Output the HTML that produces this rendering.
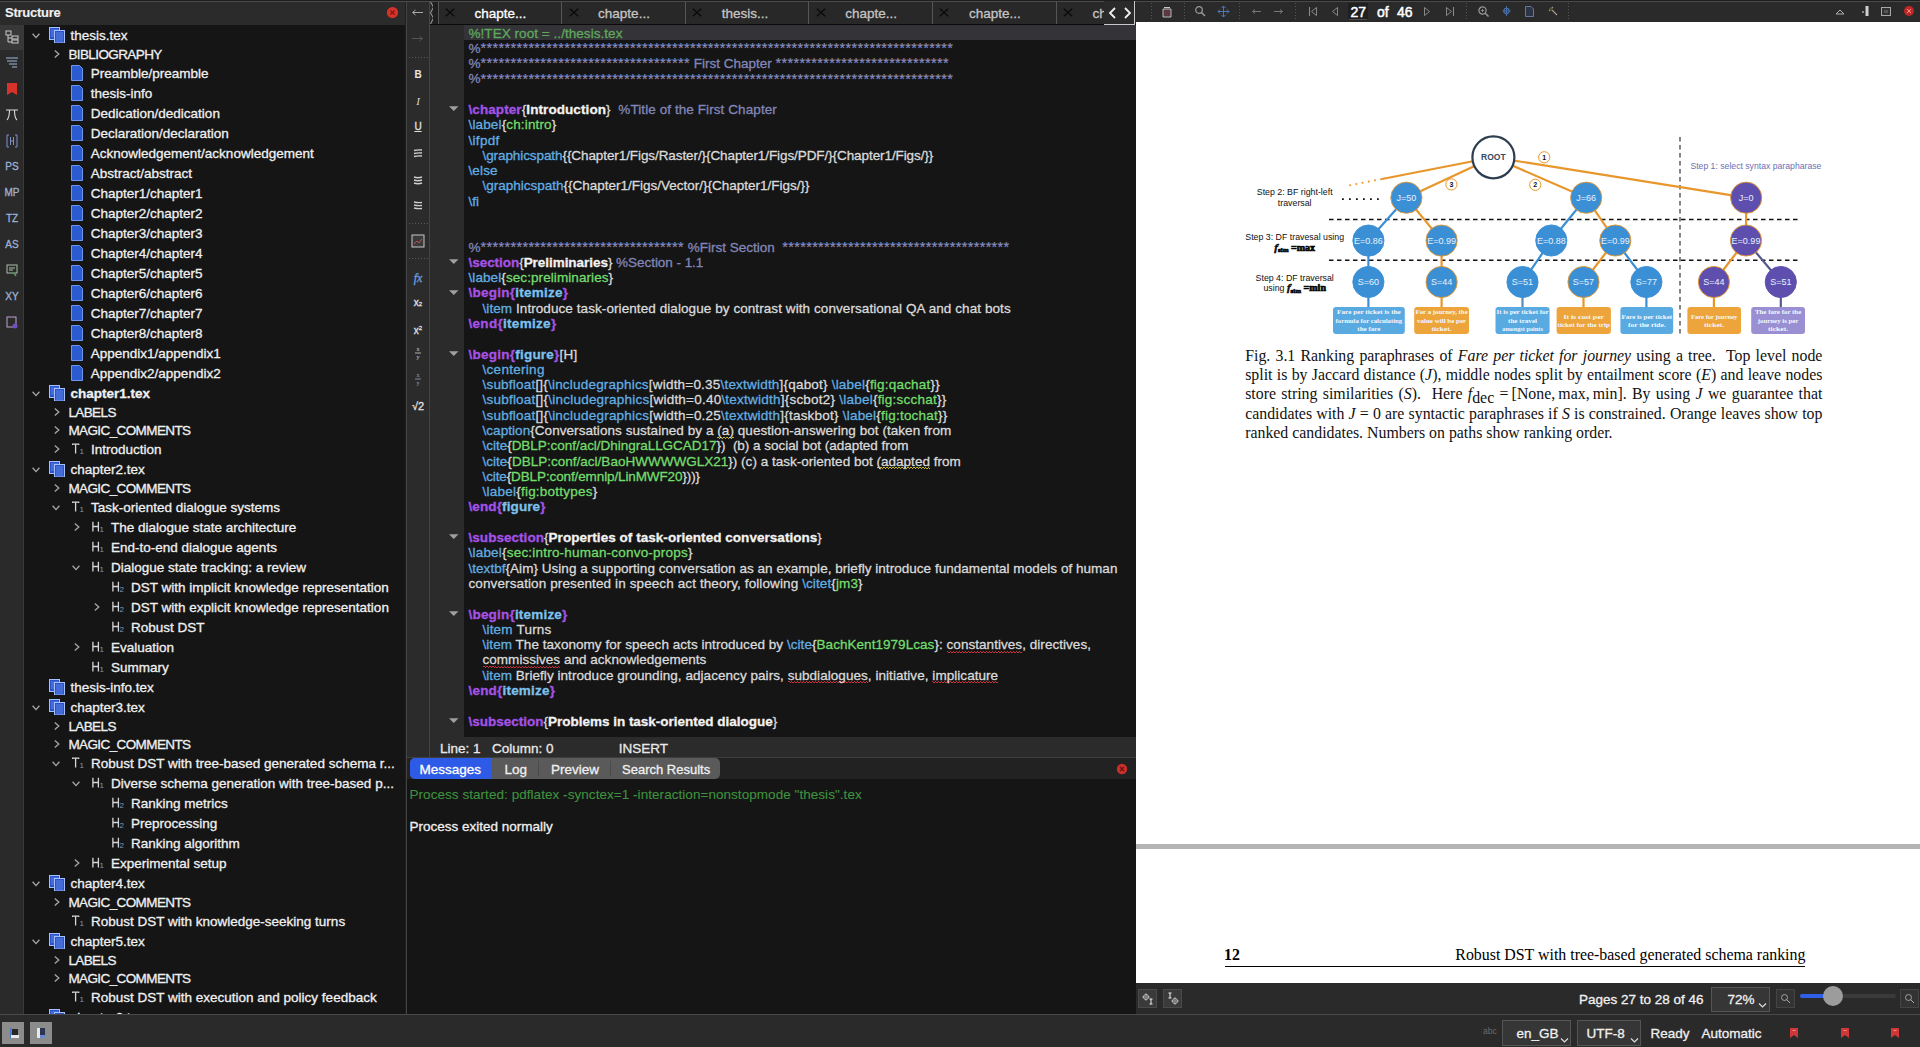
<!DOCTYPE html><html><head><meta charset="utf-8"><style>
*{margin:0;padding:0;box-sizing:border-box}
html,body{width:1920px;height:1047px;overflow:hidden;background:#1b1b1b;font-family:"Liberation Sans",sans-serif;color:#e6e6e6;-webkit-text-stroke-width:0.3px}
.a{position:absolute}
.t{position:absolute;white-space:pre;font-size:13.5px;line-height:20px}
</style></head><body>
<div class="a" style="left:0;top:0;width:1920px;height:1px;background:#1e1e1e"></div>
<div class="a" style="left:0;top:1px;width:1920px;height:1px;background:#4a4a4a"></div>
<div class="a" style="left:0;top:2px;width:406px;height:23px;background:#2b2b2b"></div>
<div class="t" style="left:5px;top:3px;font-weight:bold;font-size:13px;letter-spacing:-0.25px;color:#f0f0f0;-webkit-text-stroke-width:0.1px">Structure</div>
<div class="a" style="left:0;top:25px;width:23px;height:989px;background:#2a2a2a"></div>
<div class="a" style="left:23px;top:25px;width:1px;height:989px;background:#3a3a3a"></div>
<div class="a" style="left:24px;top:25px;width:381px;height:989px;background:#151515"></div>
<div class="a" style="left:405px;top:2px;width:2px;height:1012px;background:#1e1e1e"></div>
<div class="a" style="left:406px;top:2px;width:1px;height:1012px;background:#444"></div>
<div class="a" style="left:407px;top:2px;width:22px;height:755px;background:#2b2b2b"></div>
<div class="a" style="left:429px;top:2px;width:1px;height:755px;background:#444"></div>
<div class="a" style="left:430px;top:2px;width:706px;height:22px;background:#282828"></div>
<div class="a" style="left:430px;top:24px;width:706px;height:1px;background:#0a0a0a"></div>
<div class="a" style="left:430px;top:25px;width:34px;height:712px;background:#2b2b2b"></div>
<div class="a" style="left:464px;top:25px;width:672px;height:712px;background:#151515"></div>
<div class="a" style="left:464px;top:25px;width:672px;height:15px;background:#333338"></div>
<div class="a" style="left:430px;top:737px;width:706px;height:20px;background:#2b2b2b"></div>
<div class="a" style="left:407px;top:757px;width:729px;height:257px;background:#151515"></div>
<div class="a" style="left:1136px;top:2px;width:784px;height:20px;background:#2a2a2a"></div>
<div class="a" style="left:1136px;top:22px;width:784px;height:961px;background:#ffffff"></div>
<div class="a" style="left:1136px;top:844px;width:784px;height:5px;background:#b4b4b4"></div>
<div class="a" style="left:1136px;top:983px;width:784px;height:31px;background:#2a2a2a"></div>
<div class="a" style="left:0;top:1014px;width:1920px;height:1px;background:#4a4a4a"></div>
<div class="a" style="left:0;top:1015px;width:1920px;height:32px;background:#2a2a2a"></div>
<svg width="0" height="0" style="position:absolute"><defs>
<symbol id="chv" viewBox="0 0 8 6"><path d="M0.6 0.8 L4 4.6 L7.4 0.8" fill="none" stroke="#a8a8a8" stroke-width="1.3"/></symbol>
<symbol id="chr" viewBox="0 0 6 8"><path d="M0.8 0.6 L4.8 4 L0.8 7.4" fill="none" stroke="#a8a8a8" stroke-width="1.3"/></symbol>
<symbol id="doc" viewBox="0 0 12 16"><path d="M0.5 0.5 H8.5 L11.5 3.5 V15.5 H0.5 Z" fill="#2b5bd0" stroke="#7196e8" stroke-width="1"/></symbol>
<symbol id="mdoc" viewBox="0 0 16 16"><rect x="0.5" y="0.5" width="10" height="12" fill="#2a52cc" stroke="#a4c0ff" stroke-width="1"/><path d="M2 3h7M2 5h7M2 7h7M2 9h7" stroke="#86a8f0" stroke-width="0.6"/><rect x="5.5" y="3.5" width="10" height="12.5" fill="#2a52cc" stroke="#a4c0ff" stroke-width="1"/><path d="M7 6h7M7 8h7M7 10h7M7 12h7M7 14h7" stroke="#86a8f0" stroke-width="0.6"/></symbol>
</defs></svg>
<div class="a" style="left:0;top:0;width:405px;height:1014px;overflow:hidden">
<svg class="a" style="left:32px;top:32.5px" width="8" height="6"><use href="#chv"/></svg>
<svg class="a" style="left:49px;top:27.0px" width="16" height="16"><use href="#mdoc"/></svg>
<div class="t" style="left:70.5px;top:25.8px;color:#f0f0f0">thesis.tex</div>
<svg class="a" style="left:53.5px;top:50.0px" width="6" height="8"><use href="#chr"/></svg>
<div class="t" style="left:68.4px;top:44.8px;letter-spacing:-0.6px;color:#f0f0f0">BIBLIOGRAPHY</div>
<svg class="a" style="left:71px;top:65.0px" width="12" height="16"><use href="#doc"/></svg>
<div class="t" style="left:90.8px;top:63.8px;color:#f0f0f0">Preamble/preamble</div>
<svg class="a" style="left:71px;top:85.0px" width="12" height="16"><use href="#doc"/></svg>
<div class="t" style="left:90.8px;top:83.8px;color:#f0f0f0">thesis-info</div>
<svg class="a" style="left:71px;top:105.0px" width="12" height="16"><use href="#doc"/></svg>
<div class="t" style="left:90.8px;top:103.8px;color:#f0f0f0">Dedication/dedication</div>
<svg class="a" style="left:71px;top:125.0px" width="12" height="16"><use href="#doc"/></svg>
<div class="t" style="left:90.8px;top:123.8px;color:#f0f0f0">Declaration/declaration</div>
<svg class="a" style="left:71px;top:145.0px" width="12" height="16"><use href="#doc"/></svg>
<div class="t" style="left:90.8px;top:143.8px;color:#f0f0f0">Acknowledgement/acknowledgement</div>
<svg class="a" style="left:71px;top:165.0px" width="12" height="16"><use href="#doc"/></svg>
<div class="t" style="left:90.8px;top:163.8px;color:#f0f0f0">Abstract/abstract</div>
<svg class="a" style="left:71px;top:185.0px" width="12" height="16"><use href="#doc"/></svg>
<div class="t" style="left:90.8px;top:183.8px;color:#f0f0f0">Chapter1/chapter1</div>
<svg class="a" style="left:71px;top:205.0px" width="12" height="16"><use href="#doc"/></svg>
<div class="t" style="left:90.8px;top:203.8px;color:#f0f0f0">Chapter2/chapter2</div>
<svg class="a" style="left:71px;top:225.0px" width="12" height="16"><use href="#doc"/></svg>
<div class="t" style="left:90.8px;top:223.8px;color:#f0f0f0">Chapter3/chapter3</div>
<svg class="a" style="left:71px;top:245.0px" width="12" height="16"><use href="#doc"/></svg>
<div class="t" style="left:90.8px;top:243.8px;color:#f0f0f0">Chapter4/chapter4</div>
<svg class="a" style="left:71px;top:265.0px" width="12" height="16"><use href="#doc"/></svg>
<div class="t" style="left:90.8px;top:263.8px;color:#f0f0f0">Chapter5/chapter5</div>
<svg class="a" style="left:71px;top:285.0px" width="12" height="16"><use href="#doc"/></svg>
<div class="t" style="left:90.8px;top:283.8px;color:#f0f0f0">Chapter6/chapter6</div>
<svg class="a" style="left:71px;top:305.0px" width="12" height="16"><use href="#doc"/></svg>
<div class="t" style="left:90.8px;top:303.8px;color:#f0f0f0">Chapter7/chapter7</div>
<svg class="a" style="left:71px;top:325.0px" width="12" height="16"><use href="#doc"/></svg>
<div class="t" style="left:90.8px;top:323.8px;color:#f0f0f0">Chapter8/chapter8</div>
<svg class="a" style="left:71px;top:345.0px" width="12" height="16"><use href="#doc"/></svg>
<div class="t" style="left:90.8px;top:343.8px;color:#f0f0f0">Appendix1/appendix1</div>
<svg class="a" style="left:71px;top:365.0px" width="12" height="16"><use href="#doc"/></svg>
<div class="t" style="left:90.8px;top:363.8px;color:#f0f0f0">Appendix2/appendix2</div>
<svg class="a" style="left:32px;top:390.5px" width="8" height="6"><use href="#chv"/></svg>
<svg class="a" style="left:49px;top:385.0px" width="16" height="16"><use href="#mdoc"/></svg>
<div class="t" style="left:70.5px;top:383.8px;font-weight:bold;color:#f0f0f0">chapter1.tex</div>
<svg class="a" style="left:53.5px;top:408.0px" width="6" height="8"><use href="#chr"/></svg>
<div class="t" style="left:68.4px;top:402.8px;letter-spacing:-0.6px;color:#f0f0f0">LABELS</div>
<svg class="a" style="left:53.5px;top:426.0px" width="6" height="8"><use href="#chr"/></svg>
<div class="t" style="left:68.4px;top:420.8px;letter-spacing:-0.6px;color:#f0f0f0">MAGIC_COMMENTS</div>
<svg class="a" style="left:53.5px;top:445.0px" width="6" height="8"><use href="#chr"/></svg>
<svg class="a" style="left:72px;top:443.0px" width="13" height="12"><path d="M0 1.1H7.2M3.6 1.1V10.4M0.5 0.5V2M6.7 0.5V2" fill="none" stroke="#d6d6d6" stroke-width="1.3"/><text x="7.6" y="10.6" font-size="8" font-family="Liberation Sans" fill="#7a9ac0">1</text></svg>
<div class="t" style="left:91px;top:439.8px;color:#f0f0f0">Introduction</div>
<svg class="a" style="left:32px;top:466.5px" width="8" height="6"><use href="#chv"/></svg>
<svg class="a" style="left:49px;top:461.0px" width="16" height="16"><use href="#mdoc"/></svg>
<div class="t" style="left:70.5px;top:459.8px;color:#f0f0f0">chapter2.tex</div>
<svg class="a" style="left:53.5px;top:484.0px" width="6" height="8"><use href="#chr"/></svg>
<div class="t" style="left:68.4px;top:478.8px;letter-spacing:-0.6px;color:#f0f0f0">MAGIC_COMMENTS</div>
<svg class="a" style="left:52px;top:504.5px" width="8" height="6"><use href="#chv"/></svg>
<svg class="a" style="left:72px;top:501.0px" width="13" height="12"><path d="M0 1.1H7.2M3.6 1.1V10.4M0.5 0.5V2M6.7 0.5V2" fill="none" stroke="#d6d6d6" stroke-width="1.3"/><text x="7.6" y="10.6" font-size="8" font-family="Liberation Sans" fill="#7a9ac0">1</text></svg>
<div class="t" style="left:91px;top:497.8px;color:#f0f0f0">Task-oriented dialogue systems</div>
<svg class="a" style="left:73.5px;top:523.0px" width="6" height="8"><use href="#chr"/></svg>
<svg class="a" style="left:92px;top:521.0px" width="13" height="12"><path d="M0.9 0.8V10.4M6.4 0.8V10.4M0.9 5.5H6.4" fill="none" stroke="#d6d6d6" stroke-width="1.3"/><text x="7.6" y="10.6" font-size="8" font-family="Liberation Sans" fill="#7a9ac0">1</text></svg>
<div class="t" style="left:111px;top:517.8px;color:#f0f0f0">The dialogue state architecture</div>
<svg class="a" style="left:92px;top:541.0px" width="13" height="12"><path d="M0.9 0.8V10.4M6.4 0.8V10.4M0.9 5.5H6.4" fill="none" stroke="#d6d6d6" stroke-width="1.3"/><text x="7.6" y="10.6" font-size="8" font-family="Liberation Sans" fill="#7a9ac0">1</text></svg>
<div class="t" style="left:111px;top:537.8px;color:#f0f0f0">End-to-end dialogue agents</div>
<svg class="a" style="left:72px;top:564.5px" width="8" height="6"><use href="#chv"/></svg>
<svg class="a" style="left:92px;top:561.0px" width="13" height="12"><path d="M0.9 0.8V10.4M6.4 0.8V10.4M0.9 5.5H6.4" fill="none" stroke="#d6d6d6" stroke-width="1.3"/><text x="7.6" y="10.6" font-size="8" font-family="Liberation Sans" fill="#7a9ac0">1</text></svg>
<div class="t" style="left:111px;top:557.8px;color:#f0f0f0">Dialogue state tracking: a review</div>
<svg class="a" style="left:112px;top:581.0px" width="13" height="12"><path d="M0.9 0.8V10.4M6.4 0.8V10.4M0.9 5.5H6.4" fill="none" stroke="#d6d6d6" stroke-width="1.3"/><text x="7.6" y="10.6" font-size="8" font-family="Liberation Sans" fill="#7a9ac0">2</text></svg>
<div class="t" style="left:131px;top:577.8px;color:#f0f0f0">DST with implicit knowledge representation</div>
<svg class="a" style="left:93.5px;top:603.0px" width="6" height="8"><use href="#chr"/></svg>
<svg class="a" style="left:112px;top:601.0px" width="13" height="12"><path d="M0.9 0.8V10.4M6.4 0.8V10.4M0.9 5.5H6.4" fill="none" stroke="#d6d6d6" stroke-width="1.3"/><text x="7.6" y="10.6" font-size="8" font-family="Liberation Sans" fill="#7a9ac0">2</text></svg>
<div class="t" style="left:131px;top:597.8px;color:#f0f0f0">DST with explicit knowledge representation</div>
<svg class="a" style="left:112px;top:621.0px" width="13" height="12"><path d="M0.9 0.8V10.4M6.4 0.8V10.4M0.9 5.5H6.4" fill="none" stroke="#d6d6d6" stroke-width="1.3"/><text x="7.6" y="10.6" font-size="8" font-family="Liberation Sans" fill="#7a9ac0">2</text></svg>
<div class="t" style="left:131px;top:617.8px;color:#f0f0f0">Robust DST</div>
<svg class="a" style="left:73.5px;top:643.0px" width="6" height="8"><use href="#chr"/></svg>
<svg class="a" style="left:92px;top:641.0px" width="13" height="12"><path d="M0.9 0.8V10.4M6.4 0.8V10.4M0.9 5.5H6.4" fill="none" stroke="#d6d6d6" stroke-width="1.3"/><text x="7.6" y="10.6" font-size="8" font-family="Liberation Sans" fill="#7a9ac0">1</text></svg>
<div class="t" style="left:111px;top:637.8px;color:#f0f0f0">Evaluation</div>
<svg class="a" style="left:92px;top:661.0px" width="13" height="12"><path d="M0.9 0.8V10.4M6.4 0.8V10.4M0.9 5.5H6.4" fill="none" stroke="#d6d6d6" stroke-width="1.3"/><text x="7.6" y="10.6" font-size="8" font-family="Liberation Sans" fill="#7a9ac0">1</text></svg>
<div class="t" style="left:111px;top:657.8px;color:#f0f0f0">Summary</div>
<svg class="a" style="left:49px;top:679.0px" width="16" height="16"><use href="#mdoc"/></svg>
<div class="t" style="left:70.5px;top:677.8px;color:#f0f0f0">thesis-info.tex</div>
<svg class="a" style="left:32px;top:704.5px" width="8" height="6"><use href="#chv"/></svg>
<svg class="a" style="left:49px;top:699.0px" width="16" height="16"><use href="#mdoc"/></svg>
<div class="t" style="left:70.5px;top:697.8px;color:#f0f0f0">chapter3.tex</div>
<svg class="a" style="left:53.5px;top:722.0px" width="6" height="8"><use href="#chr"/></svg>
<div class="t" style="left:68.4px;top:716.8px;letter-spacing:-0.6px;color:#f0f0f0">LABELS</div>
<svg class="a" style="left:53.5px;top:740.0px" width="6" height="8"><use href="#chr"/></svg>
<div class="t" style="left:68.4px;top:734.8px;letter-spacing:-0.6px;color:#f0f0f0">MAGIC_COMMENTS</div>
<svg class="a" style="left:52px;top:760.5px" width="8" height="6"><use href="#chv"/></svg>
<svg class="a" style="left:72px;top:757.0px" width="13" height="12"><path d="M0 1.1H7.2M3.6 1.1V10.4M0.5 0.5V2M6.7 0.5V2" fill="none" stroke="#d6d6d6" stroke-width="1.3"/><text x="7.6" y="10.6" font-size="8" font-family="Liberation Sans" fill="#7a9ac0">1</text></svg>
<div class="t" style="left:91px;top:753.8px;color:#f0f0f0">Robust DST with tree-based generated schema r...</div>
<svg class="a" style="left:72px;top:780.5px" width="8" height="6"><use href="#chv"/></svg>
<svg class="a" style="left:92px;top:777.0px" width="13" height="12"><path d="M0.9 0.8V10.4M6.4 0.8V10.4M0.9 5.5H6.4" fill="none" stroke="#d6d6d6" stroke-width="1.3"/><text x="7.6" y="10.6" font-size="8" font-family="Liberation Sans" fill="#7a9ac0">1</text></svg>
<div class="t" style="left:111px;top:773.8px;color:#f0f0f0">Diverse schema generation with tree-based p...</div>
<svg class="a" style="left:112px;top:797.0px" width="13" height="12"><path d="M0.9 0.8V10.4M6.4 0.8V10.4M0.9 5.5H6.4" fill="none" stroke="#d6d6d6" stroke-width="1.3"/><text x="7.6" y="10.6" font-size="8" font-family="Liberation Sans" fill="#7a9ac0">2</text></svg>
<div class="t" style="left:131px;top:793.8px;color:#f0f0f0">Ranking metrics</div>
<svg class="a" style="left:112px;top:817.0px" width="13" height="12"><path d="M0.9 0.8V10.4M6.4 0.8V10.4M0.9 5.5H6.4" fill="none" stroke="#d6d6d6" stroke-width="1.3"/><text x="7.6" y="10.6" font-size="8" font-family="Liberation Sans" fill="#7a9ac0">2</text></svg>
<div class="t" style="left:131px;top:813.8px;color:#f0f0f0">Preprocessing</div>
<svg class="a" style="left:112px;top:837.0px" width="13" height="12"><path d="M0.9 0.8V10.4M6.4 0.8V10.4M0.9 5.5H6.4" fill="none" stroke="#d6d6d6" stroke-width="1.3"/><text x="7.6" y="10.6" font-size="8" font-family="Liberation Sans" fill="#7a9ac0">2</text></svg>
<div class="t" style="left:131px;top:833.8px;color:#f0f0f0">Ranking algorithm</div>
<svg class="a" style="left:73.5px;top:859.0px" width="6" height="8"><use href="#chr"/></svg>
<svg class="a" style="left:92px;top:857.0px" width="13" height="12"><path d="M0.9 0.8V10.4M6.4 0.8V10.4M0.9 5.5H6.4" fill="none" stroke="#d6d6d6" stroke-width="1.3"/><text x="7.6" y="10.6" font-size="8" font-family="Liberation Sans" fill="#7a9ac0">1</text></svg>
<div class="t" style="left:111px;top:853.8px;color:#f0f0f0">Experimental setup</div>
<svg class="a" style="left:32px;top:880.5px" width="8" height="6"><use href="#chv"/></svg>
<svg class="a" style="left:49px;top:875.0px" width="16" height="16"><use href="#mdoc"/></svg>
<div class="t" style="left:70.5px;top:873.8px;color:#f0f0f0">chapter4.tex</div>
<svg class="a" style="left:53.5px;top:898.0px" width="6" height="8"><use href="#chr"/></svg>
<div class="t" style="left:68.4px;top:892.8px;letter-spacing:-0.6px;color:#f0f0f0">MAGIC_COMMENTS</div>
<svg class="a" style="left:72px;top:915.0px" width="13" height="12"><path d="M0 1.1H7.2M3.6 1.1V10.4M0.5 0.5V2M6.7 0.5V2" fill="none" stroke="#d6d6d6" stroke-width="1.3"/><text x="7.6" y="10.6" font-size="8" font-family="Liberation Sans" fill="#7a9ac0">1</text></svg>
<div class="t" style="left:91px;top:911.8px;color:#f0f0f0">Robust DST with knowledge-seeking turns</div>
<svg class="a" style="left:32px;top:938.5px" width="8" height="6"><use href="#chv"/></svg>
<svg class="a" style="left:49px;top:933.0px" width="16" height="16"><use href="#mdoc"/></svg>
<div class="t" style="left:70.5px;top:931.8px;color:#f0f0f0">chapter5.tex</div>
<svg class="a" style="left:53.5px;top:956.0px" width="6" height="8"><use href="#chr"/></svg>
<div class="t" style="left:68.4px;top:950.8px;letter-spacing:-0.6px;color:#f0f0f0">LABELS</div>
<svg class="a" style="left:53.5px;top:974.0px" width="6" height="8"><use href="#chr"/></svg>
<div class="t" style="left:68.4px;top:968.8px;letter-spacing:-0.6px;color:#f0f0f0">MAGIC_COMMENTS</div>
<svg class="a" style="left:72px;top:991.0px" width="13" height="12"><path d="M0 1.1H7.2M3.6 1.1V10.4M0.5 0.5V2M6.7 0.5V2" fill="none" stroke="#d6d6d6" stroke-width="1.3"/><text x="7.6" y="10.6" font-size="8" font-family="Liberation Sans" fill="#7a9ac0">1</text></svg>
<div class="t" style="left:91px;top:987.8px;color:#f0f0f0">Robust DST with execution and policy feedback</div>
<svg class="a" style="left:32px;top:1014.5px" width="8" height="6"><use href="#chv"/></svg>
<svg class="a" style="left:49px;top:1009.0px" width="16" height="16"><use href="#mdoc"/></svg>
<div class="t" style="left:70.5px;top:1007.8px;color:#f0f0f0">chapter6.tex</div>
</div>
<style>
.ed{position:absolute;left:468.5px;top:26.5px;font-size:13.5px;line-height:15.27px;white-space:pre;color:#dadada}
.ed div{position:absolute;left:0;height:15.27px}
.ed .g{color:#5fa85c}
.ed .l{color:#8286b8}
.ed .k{color:#a652e6;font-weight:bold}
.ed .c{color:#62aee2}
.ed .w{color:#f2f2f2;font-weight:bold}
.ed .ag{color:#74dc6c}
.ed .e{color:#7cc0ee;font-weight:bold}
.ed .i{display:inline-block;width:14px}
.ed .st{color:#8a8ec0;font-size:14.5px;letter-spacing:0.34px;position:relative;top:0.3px;-webkit-text-stroke-width:0.15px}
.ed .sr{display:inline-block;height:15.29px;background-image:repeating-linear-gradient(90deg,#c8303c 0 1.5px,transparent 1.5px 3px),repeating-linear-gradient(90deg,transparent 0 1.5px,#c8303c 1.5px 3px);background-size:100% 1px,100% 1px;background-position:0 13.5px,0 14.5px;background-repeat:no-repeat}
.ed .sy{display:inline-block;height:15.29px;background-image:repeating-linear-gradient(90deg,#c8b820 0 1.5px,transparent 1.5px 3px),repeating-linear-gradient(90deg,transparent 0 1.5px,#c8b820 1.5px 3px);background-size:100% 1px,100% 1px;background-position:0 13.5px,0 14.5px;background-repeat:no-repeat}
</style>
<div class="ed"><div style="top:-1.0px;letter-spacing:0.048px"><span class="g">%!TEX root = ../thesis.tex</span></div><div style="top:14.29px"><span class="l">%</span><span class="st">*******************************************************************************</span></div><div style="top:29.58px"><span class="l">%</span><span class="st">***********************************</span><span class="l"> First Chapter </span><span class="st">*****************************</span></div><div style="top:44.87px"><span class="l">%</span><span class="st">*******************************************************************************</span></div><div style="top:60.16px"></div><div style="top:75.45px;letter-spacing:0.084px"><span class="k">\chapter</span><span class="n">{</span><span class="w">Introduction</span><span class="n">}  </span><span class="l">%Title of the First Chapter</span></div><div style="top:90.74px;letter-spacing:0.146px"><span class="c">\label</span><span class="n">{</span><span class="ag">ch:intro</span><span class="n">}</span></div><div style="top:106.03px;letter-spacing:0.3px"><span class="c">\ifpdf</span></div><div style="top:121.32px;letter-spacing:-0.085px"><span class="i"></span><span class="c">\graphicspath</span><span class="n">{{Chapter1/Figs/Raster/}{Chapter1/Figs/PDF/}{Chapter1/Figs/}}</span></div><div style="top:136.61px;letter-spacing:0.124px"><span class="c">\else</span></div><div style="top:151.9px;letter-spacing:-0.003px"><span class="i"></span><span class="c">\graphicspath</span><span class="n">{{Chapter1/Figs/Vector/}{Chapter1/Figs/}}</span></div><div style="top:167.19px"><span class="c">\fi</span></div><div style="top:182.48px"></div><div style="top:197.77px"></div><div style="top:213.06px"><span class="l">%</span><span class="st">**********************************</span><span class="l"> %First Section  </span><span class="st">**************************************</span></div><div style="top:228.35px;letter-spacing:-0.043px"><span class="k">\section</span><span class="n">{</span><span class="w">Preliminaries</span><span class="n">} </span><span class="l">%Section - 1.1</span></div><div style="top:243.64px;letter-spacing:0.083px"><span class="c">\label</span><span class="n">{</span><span class="ag">sec:preliminaries</span><span class="n">}</span></div><div style="top:258.93px;letter-spacing:0.243px"><span class="k">\begin{</span><span class="e">itemize</span><span class="k">}</span></div><div style="top:274.22px;letter-spacing:0.077px"><span class="i"></span><span class="c">\item</span><span class="n"> Introduce task-oriented dialogue by contrast with conversational QA and chat bots</span></div><div style="top:289.51px;letter-spacing:0.3px"><span class="k">\end{</span><span class="e">itemize</span><span class="k">}</span></div><div style="top:304.8px"></div><div style="top:320.09px;letter-spacing:0.238px"><span class="k">\begin{</span><span class="e">figure</span><span class="k">}</span><span class="n">[H]</span></div><div style="top:335.38px;letter-spacing:0.289px"><span class="i"></span><span class="c">\centering</span></div><div style="top:350.67px;letter-spacing:0.203px"><span class="i"></span><span class="c">\subfloat</span><span class="n">[]{</span><span class="c">\includegraphics</span><span class="n">[width=0.35</span><span class="c">\textwidth</span><span class="n">]{qabot} </span><span class="c">\label</span><span class="n">{</span><span class="ag">fig:qachat</span><span class="n">}}</span></div><div style="top:365.96px;letter-spacing:0.226px"><span class="i"></span><span class="c">\subfloat</span><span class="n">[]{</span><span class="c">\includegraphics</span><span class="n">[width=0.40</span><span class="c">\textwidth</span><span class="n">]{scbot2} </span><span class="c">\label</span><span class="n">{</span><span class="ag">fig:scchat</span><span class="n">}}</span></div><div style="top:381.25px;letter-spacing:0.218px"><span class="i"></span><span class="c">\subfloat</span><span class="n">[]{</span><span class="c">\includegraphics</span><span class="n">[width=0.25</span><span class="c">\textwidth</span><span class="n">]{taskbot} </span><span class="c">\label</span><span class="n">{</span><span class="ag">fig:tochat</span><span class="n">}}</span></div><div style="top:396.54px;letter-spacing:0.056px"><span class="i"></span><span class="c">\caption</span><span class="n">{Conversations sustained by a </span><span class="sy">(a)</span><span class="n"> question-answering bot (taken from</span></div><div style="top:411.83px;letter-spacing:-0.026px"><span class="i"></span><span class="c">\cite</span><span class="n">{</span><span class="ag">DBLP:conf/acl/DhingraLLGCAD17</span><span class="n">})  (b) a social bot (adapted from</span></div><div style="top:427.12px;letter-spacing:0.014px"><span class="i"></span><span class="c">\cite</span><span class="n">{</span><span class="ag">DBLP:conf/acl/BaoHWWWWGLX21</span><span class="n">}) (c) a task-oriented bot </span><span class="sy">(adapted</span><span class="n"> from</span></div><div style="top:442.41px;letter-spacing:-0.115px"><span class="i"></span><span class="c">\cite</span><span class="n">{</span><span class="ag">DBLP:conf/emnlp/LinMWF20</span><span class="n">}))}</span></div><div style="top:457.7px;letter-spacing:0.231px"><span class="i"></span><span class="c">\label</span><span class="n">{</span><span class="ag">fig:bottypes</span><span class="n">}</span></div><div style="top:472.99px;letter-spacing:0.109px"><span class="k">\end{</span><span class="e">figure</span><span class="k">}</span></div><div style="top:488.28px"></div><div style="top:503.57px;letter-spacing:0.042px"><span class="k">\subsection</span><span class="n">{</span><span class="w">Properties of task-oriented conversations</span><span class="n">}</span></div><div style="top:518.86px;letter-spacing:0.206px"><span class="c">\label</span><span class="n">{</span><span class="ag">sec:intro-human-convo-props</span><span class="n">}</span></div><div style="top:534.15px;letter-spacing:0.034px"><span class="c">\textbf</span><span class="n">{Aim} Using a supporting conversation as an example, briefly introduce fundamental models of human</span></div><div style="top:549.44px;letter-spacing:0.108px"><span class="n">conversation presented in speech act theory, following </span><span class="c">\citet</span><span class="n">{</span><span class="ag">jm3</span><span class="n">}</span></div><div style="top:564.73px"></div><div style="top:580.02px;letter-spacing:0.2px"><span class="k">\begin{</span><span class="e">itemize</span><span class="k">}</span></div><div style="top:595.31px;letter-spacing:0.2px"><span class="i"></span><span class="c">\item</span><span class="n"> Turns</span></div><div style="top:610.6px;letter-spacing:0.047px"><span class="i"></span><span class="c">\item</span><span class="n"> The taxonomy for speech acts introduced by </span><span class="c">\cite</span><span class="n">{</span><span class="ag">BachKent1979Lcas</span><span class="n">}: </span><span class="sr">constantives</span><span class="n">, directives,</span></div><div style="top:625.89px;letter-spacing:0.032px"><span class="i"></span><span class="sr">commissives</span><span class="n"> and acknowledgements</span></div><div style="top:641.18px;letter-spacing:0.052px"><span class="i"></span><span class="c">\item</span><span class="n"> Briefly introduce grounding, adjacency pairs, </span><span class="sr">subdialogues</span><span class="n">, initiative, </span><span class="sr">implicature</span></div><div style="top:656.47px;letter-spacing:0.2px"><span class="k">\end{</span><span class="e">itemize</span><span class="k">}</span></div><div style="top:671.76px"></div><div style="top:687.05px;letter-spacing:-0.008px"><span class="k">\subsection</span><span class="n">{</span><span class="w">Problems in task-oriented dialogue</span><span class="n">}</span></div></div>
<svg class="a" style="left:449px;top:106.0px" width="10" height="6"><path d="M0 0.3H9.5L4.75 5Z" fill="#a0a0a0"/></svg>
<svg class="a" style="left:449px;top:258.9px" width="10" height="6"><path d="M0 0.3H9.5L4.75 5Z" fill="#a0a0a0"/></svg>
<svg class="a" style="left:449px;top:289.5px" width="10" height="6"><path d="M0 0.3H9.5L4.75 5Z" fill="#a0a0a0"/></svg>
<svg class="a" style="left:449px;top:350.7px" width="10" height="6"><path d="M0 0.3H9.5L4.75 5Z" fill="#a0a0a0"/></svg>
<svg class="a" style="left:449px;top:534.2px" width="10" height="6"><path d="M0 0.3H9.5L4.75 5Z" fill="#a0a0a0"/></svg>
<svg class="a" style="left:449px;top:610.6px" width="10" height="6"><path d="M0 0.3H9.5L4.75 5Z" fill="#a0a0a0"/></svg>
<svg class="a" style="left:449px;top:717.6px" width="10" height="6"><path d="M0 0.3H9.5L4.75 5Z" fill="#a0a0a0"/></svg>
<svg class="a" style="left:386px;top:6px" width="13" height="13"><circle cx="6.5" cy="6.5" r="5.6" fill="#d8332a"/><path d="M4.3 4.3L8.7 8.7M8.7 4.3L4.3 8.7" stroke="#7a1410" stroke-width="1.2"/></svg>
<div class="a" style="left:0;top:25px;width:23px;height:25px;background:#383838"></div>
<svg class="a" style="left:5px;top:30px" width="14" height="14"><rect x="1" y="1" width="5" height="4" fill="none" stroke="#c8c8c8" stroke-width="1"/><rect x="7" y="6" width="6" height="3" fill="none" stroke="#c8c8c8"/><rect x="7" y="10" width="6" height="3" fill="none" stroke="#c8c8c8"/><path d="M3 5V12H7M3 8H7" fill="none" stroke="#c8c8c8"/></svg>
<svg class="a" style="left:5px;top:56px" width="14" height="14"><path d="M1 2H13M2 5H12M4 8H12M7 11H12" stroke="#9fb6d8" stroke-width="1.2"/></svg>
<svg class="a" style="left:6px;top:82px" width="12" height="14"><path d="M1 1H11V13L6 10L1 13Z" fill="#d8332a"/></svg>
<svg class="a" style="left:5px;top:108px" width="14" height="14"><path d="M1 2H13M4.5 2Q4.5 9 2 12M9.5 2Q9.5 10 12 12" fill="none" stroke="#d8d8d8" stroke-width="1.1"/></svg>
<svg class="a" style="left:6px;top:134px" width="12" height="14"><path d="M3 1H1V13H3M9 1H11V13H9M4.5 3V11M7.5 3V11M4.5 7H7.5" fill="none" stroke="#7f90c8"/></svg>
<div class="t" style="left:3px;top:156.5px;width:18px;text-align:center;font-size:10px;color:#9cb2d6">PS</div>
<div class="t" style="left:3px;top:182.5px;width:18px;text-align:center;font-size:10px;color:#9cb2d6">MP</div>
<div class="t" style="left:3px;top:208.5px;width:18px;text-align:center;font-size:10px;color:#9cb2d6">TZ</div>
<div class="t" style="left:3px;top:234.5px;width:18px;text-align:center;font-size:10px;color:#9cb2d6">AS</div>
<svg class="a" style="left:6px;top:264px" width="12" height="13"><rect x="1" y="1" width="10" height="8" fill="none" stroke="#a8c0a8"/><path d="M3 4H9M3 6H7" stroke="#a8c0a8"/><path d="M8 9L10 12" stroke="#5a9a5a" stroke-width="1.5"/></svg>
<div class="t" style="left:3px;top:286.5px;width:18px;text-align:center;font-size:10px;color:#9cb2d6">XY</div>
<svg class="a" style="left:6px;top:316px" width="13" height="13"><rect x="1" y="1" width="9" height="10" fill="none" stroke="#c0a0d0"/><circle cx="9" cy="10" r="2.5" fill="#7050c0"/></svg>
<svg class="a" style="left:411px;top:9px" width="13" height="7"><path d="M12 3.5H2M4.5 1L1.5 3.5L4.5 6" fill="none" stroke="#a8a8a8" stroke-width="1"/></svg>
<svg class="a" style="left:411px;top:35px" width="13" height="7"><path d="M1 3.5H11M8.5 1L11.5 3.5L8.5 6" fill="none" stroke="#555" stroke-width="1"/></svg>
<div class="a" style="left:409px;top:57px;width:19px;height:1px;background-image:linear-gradient(90deg,#5a5a5a 50%,transparent 50%);background-size:3px 1px"></div>
<div class="a" style="left:409px;top:222.5px;width:19px;height:1px;background-image:linear-gradient(90deg,#5a5a5a 50%,transparent 50%);background-size:3px 1px"></div>
<div class="a" style="left:409px;top:258px;width:19px;height:1px;background-image:linear-gradient(90deg,#5a5a5a 50%,transparent 50%);background-size:3px 1px"></div>
<div class="t" style="left:407px;top:65px;width:22px;text-align:center;font-size:10px;font-weight:bold;color:#e8e8e8;-webkit-text-stroke-width:0">B</div>
<div class="t" style="left:407px;top:91px;width:22px;text-align:center;font-size:11px;font-style:italic;color:#d8d8d8;font-family:'Liberation Serif',serif;-webkit-text-stroke-width:0">I</div>
<div class="t" style="left:407px;top:117px;width:22px;text-align:center;font-size:10px;color:#e0e0e0;text-decoration:underline">U</div>
<svg class="a" style="left:410px;top:147px" width="16" height="13"><path d="M4 3.5Q8 2.5 12 3M4 6.5Q8 5.5 12 6M4 9.5Q8 8.5 12 9" fill="none" stroke="#cfcfcf" stroke-width="1.4"/></svg>
<svg class="a" style="left:410px;top:173.5px" width="16" height="13"><path d="M4 3Q8 4.5 12 3M4 6Q8 7.5 12 6M4 9Q8 10.5 12 9" fill="none" stroke="#cfcfcf" stroke-width="1.4"/></svg>
<svg class="a" style="left:410px;top:198.5px" width="16" height="13"><path d="M4 3Q8 4 12 3.5M4 6Q8 7 12 6.5M4 9Q8 10 12 9.5" fill="none" stroke="#cfcfcf" stroke-width="1.4"/></svg>
<svg class="a" style="left:411px;top:234px" width="14" height="14"><rect x="1" y="1" width="12" height="12" fill="#3a3a3a" stroke="#c8c8c8"/><path d="M3 10L6 7L8 9L11 5" stroke="#c05050" fill="none"/></svg>
<div class="t" style="left:407px;top:268px;width:22px;text-align:center;font-size:12px;font-style:italic;color:#6aa0e0;font-family:'Liberation Serif',serif">fx</div>
<div class="t" style="left:407px;top:293px;width:22px;text-align:center;font-size:10px;color:#e0e0e0">x<span style="font-size:6px">2</span></div>
<div class="t" style="left:407px;top:318px;width:22px;text-align:center;font-size:10px;color:#e0e0e0">x<sup style="font-size:6px">2</sup></div>
<svg class="a" style="left:413px;top:346.4px" width="10" height="14"><text x="5" y="5" font-size="6" fill="#d0d0d0" text-anchor="middle" font-family="Liberation Serif">x</text><path d="M2 7H8" stroke="#d0d0d0" stroke-width="0.8"/><text x="5" y="13" font-size="6" fill="#d0d0d0" text-anchor="middle" font-family="Liberation Serif">y</text></svg>
<svg class="a" style="left:413px;top:371.5px" width="10" height="14"><text x="5" y="5" font-size="6" fill="#a0a0a0" text-anchor="middle" font-family="Liberation Serif">x</text><path d="M2 7H8" stroke="#a0a0a0" stroke-width="0.8"/><text x="5" y="13" font-size="6" fill="#a0a0a0" text-anchor="middle" font-family="Liberation Serif">y</text></svg>
<div class="t" style="left:407px;top:396px;width:22px;text-align:center;font-size:11px;color:#e0e0e0">&#8730;2</div>
<svg class="a" style="left:429px;top:2px" width="6" height="22"><path d="M1.5 0L4.5 5L1.5 11L4.5 16L1.5 22" fill="none" stroke="#b0b0b0" stroke-width="0.9"/></svg>
<div class="a" style="left:433px;top:2px;width:5px;height:22px;background:#1f1f1f"></div>
<div class="a" style="left:437.5px;top:2px;width:1px;height:22px;background:#555"></div>
<svg class="a" style="left:445.0px;top:8px" width="10" height="9"><path d="M0.8 0.8L9.2 8.2M9.2 0.8L0.8 8.2" stroke="#0a0a0a" stroke-width="1.3"/></svg>
<div class="t" style="left:474.5px;top:4.14px;font-size:13.5px;color:#ffffff;font-weight:normal;">chapte...</div>
<div class="a" style="left:561.1px;top:2px;width:1px;height:22px;background:#555"></div>
<svg class="a" style="left:568.6px;top:8px" width="10" height="9"><path d="M0.8 0.8L9.2 8.2M9.2 0.8L0.8 8.2" stroke="#0a0a0a" stroke-width="1.3"/></svg>
<div class="t" style="left:598.1px;top:4.14px;font-size:13.5px;color:#c4c4c4;font-weight:normal;">chapte...</div>
<div class="a" style="left:684.7px;top:2px;width:1px;height:22px;background:#555"></div>
<svg class="a" style="left:692.2px;top:8px" width="10" height="9"><path d="M0.8 0.8L9.2 8.2M9.2 0.8L0.8 8.2" stroke="#0a0a0a" stroke-width="1.3"/></svg>
<div class="t" style="left:721.7px;top:4.14px;font-size:13.5px;color:#c4c4c4;font-weight:normal;">thesis...</div>
<div class="a" style="left:808.3px;top:2px;width:1px;height:22px;background:#555"></div>
<svg class="a" style="left:815.8px;top:8px" width="10" height="9"><path d="M0.8 0.8L9.2 8.2M9.2 0.8L0.8 8.2" stroke="#0a0a0a" stroke-width="1.3"/></svg>
<div class="t" style="left:845.3px;top:4.14px;font-size:13.5px;color:#c4c4c4;font-weight:normal;">chapte...</div>
<div class="a" style="left:931.9px;top:2px;width:1px;height:22px;background:#555"></div>
<svg class="a" style="left:939.4px;top:8px" width="10" height="9"><path d="M0.8 0.8L9.2 8.2M9.2 0.8L0.8 8.2" stroke="#0a0a0a" stroke-width="1.3"/></svg>
<div class="t" style="left:968.9px;top:4.14px;font-size:13.5px;color:#c4c4c4;font-weight:normal;">chapte...</div>
<div class="a" style="left:1055.5px;top:2px;width:1px;height:22px;background:#555"></div>
<svg class="a" style="left:1063.0px;top:8px" width="10" height="9"><path d="M0.8 0.8L9.2 8.2M9.2 0.8L0.8 8.2" stroke="#0a0a0a" stroke-width="1.3"/></svg>
<div class="t" style="left:1092.5px;top:4.14px;font-size:13.5px;color:#c4c4c4;font-weight:normal;">ch</div>
<div class="a" style="left:1104px;top:1px;width:31px;height:24px;background:#2a2a2a;border-right:1px solid #c8c8c8;border-bottom:1px solid #c8c8c8"></div>
<svg class="a" style="left:1107px;top:6px" width="26" height="14"><path d="M8 2L3 7L8 12M18 2L23 7L18 12" fill="none" stroke="#f0f0f0" stroke-width="1.8"/></svg>
<div class="t" style="left:440px;top:739.04px;font-size:13.5px;color:#e8e8e8;font-weight:normal;">Line: 1</div>
<div class="t" style="left:492px;top:739.04px;font-size:13.5px;color:#e8e8e8;font-weight:normal;">Column: 0</div>
<div class="t" style="left:618.7px;top:739.04px;font-size:13.5px;color:#e8e8e8;font-weight:normal;">INSERT</div>
<div class="a" style="left:407px;top:757px;width:729px;height:1px;background:#3e3e3e"></div>
<div class="a" style="left:407px;top:758px;width:729px;height:21px;background:#222"></div>
<div class="a" style="left:410px;top:758px;width:310px;height:20.5px;background:#5a5a5a;border-radius:5px"></div>
<div class="a" style="left:410px;top:758px;width:82px;height:20.5px;background:#2d5ae6;border-radius:5px 0 0 5px"></div>
<div class="a" style="left:538px;top:761px;width:1px;height:16px;background:#4a4a4a"></div>
<div class="a" style="left:610px;top:761px;width:1px;height:16px;background:#4a4a4a"></div>
<div class="t" style="left:419.5px;top:760.14px;font-size:13.5px;color:#ffffff;font-weight:normal;">Messages</div>
<div class="t" style="left:504.5px;top:760.14px;font-size:13.5px;color:#f0f0f0;font-weight:normal;">Log</div>
<div class="t" style="left:551px;top:760.14px;font-size:13.5px;color:#f0f0f0;font-weight:normal;">Preview</div>
<div class="t" style="left:622px;top:760.30px;font-size:13px;color:#f0f0f0;font-weight:normal;">Search Results</div>
<svg class="a" style="left:1116px;top:763px" width="12" height="12"><circle cx="6" cy="6" r="5.2" fill="#c8302a"/><path d="M4 4L8 8M8 4L4 8" stroke="#6a1410" stroke-width="1.1"/></svg>
<div class="t" style="left:409.5px;top:784.54px;font-size:13.5px;color:#3f923f;font-weight:normal;-webkit-text-stroke-width:0.1px;letter-spacing:0.05px">Process started: pdflatex -synctex=1 -interaction=nonstopmode "thesis".tex</div>
<div class="t" style="left:409.5px;top:817.34px;font-size:13.5px;color:#f0f0f0;font-weight:normal;">Process exited normally</div>
<div class="a" style="left:2px;top:1022px;width:22px;height:22px;background:#8c8c8c"></div>
<div class="a" style="left:30px;top:1022px;width:22px;height:22px;background:#8c8c8c"></div>
<svg class="a" style="left:2px;top:1022px" width="22" height="22"><rect x="8" y="6" width="1.5" height="10" fill="#4a78c8"/><rect x="10" y="7" width="6" height="6" fill="#262626"/><rect x="9" y="13" width="8" height="3" fill="#e8e8e8"/></svg>
<svg class="a" style="left:30px;top:1022px" width="22" height="22"><rect x="7" y="6" width="3" height="10" fill="#e8e8e8"/><rect x="10" y="6" width="5" height="7" fill="#2a3550"/><rect x="10" y="13" width="5" height="3" fill="#6a8ad0"/></svg>
<div class="a" style="left:1150.5px;top:3px;width:1px;height:18px;background-image:linear-gradient(180deg,#555 50%,transparent 50%);background-size:1px 3px"></div>
<div class="a" style="left:1183.5px;top:3px;width:1px;height:18px;background-image:linear-gradient(180deg,#555 50%,transparent 50%);background-size:1px 3px"></div>
<div class="a" style="left:1239px;top:3px;width:1px;height:18px;background-image:linear-gradient(180deg,#555 50%,transparent 50%);background-size:1px 3px"></div>
<div class="a" style="left:1295px;top:3px;width:1px;height:18px;background-image:linear-gradient(180deg,#555 50%,transparent 50%);background-size:1px 3px"></div>
<div class="a" style="left:1466px;top:3px;width:1px;height:18px;background-image:linear-gradient(180deg,#555 50%,transparent 50%);background-size:1px 3px"></div>
<div class="a" style="left:1568px;top:3px;width:1px;height:18px;background-image:linear-gradient(180deg,#555 50%,transparent 50%);background-size:1px 3px"></div>
<svg class="a" style="left:1161px;top:5px" width="12" height="13"><path d="M2 4H10V12H2Z" fill="#5a3a40" stroke="#c8c8c8" stroke-width="0.9"/><path d="M3 2.5H9" stroke="#c8c8c8"/></svg>
<svg class="a" style="left:1194px;top:5px" width="12" height="12"><circle cx="5" cy="5" r="3.3" fill="none" stroke="#9a9a9a" stroke-width="1.2"/><path d="M7.5 7.5L11 11" stroke="#9a9a9a" stroke-width="1.4"/></svg>
<svg class="a" style="left:1217px;top:5px" width="13" height="13"><path d="M6.5 1V12M1 6.5H12M6.5 1L4.5 3M6.5 1L8.5 3M6.5 12L4.5 10M6.5 12L8.5 10M1 6.5L3 4.5M1 6.5L3 8.5M12 6.5L10 4.5M12 6.5L10 8.5" fill="none" stroke="#4a78b8" stroke-width="1"/></svg>
<svg class="a" style="left:1251px;top:8px" width="11" height="7"><path d="M10 3.5H2M4 1.5L1.5 3.5L4 5.5" fill="none" stroke="#777" stroke-width="1"/></svg>
<svg class="a" style="left:1273px;top:8px" width="11" height="7"><path d="M1 3.5H9M7 1.5L9.5 3.5L7 5.5" fill="none" stroke="#777" stroke-width="1"/></svg>
<svg class="a" style="left:1308px;top:6px" width="10" height="11"><path d="M1.5 1V10" stroke="#888" stroke-width="1.1"/><path d="M8.5 1.5L3.5 5.5L8.5 9.5Z" fill="none" stroke="#888"/></svg>
<svg class="a" style="left:1331px;top:6px" width="8" height="11"><path d="M6.5 1.5L1.5 5.5L6.5 9.5Z" fill="none" stroke="#888"/></svg>
<div class="a" style="left:1348px;top:3px;width:20px;height:16px;background:#1f1f1f"></div>
<div class="t" style="left:1350.4px;top:1.57px;font-size:14px;color:#ffffff;font-weight:normal;-webkit-text-stroke-width:0.5px">27</div>
<div class="a" style="left:1349px;top:19px;width:18px;height:1px;background:#4a4a4a"></div>
<div class="t" style="left:1377px;top:1.57px;font-size:14px;color:#ffffff;font-weight:normal;-webkit-text-stroke-width:0.5px">of</div>
<div class="t" style="left:1397px;top:1.57px;font-size:14px;color:#ffffff;font-weight:normal;-webkit-text-stroke-width:0.5px">46</div>
<svg class="a" style="left:1423px;top:6px" width="8" height="11"><path d="M1.5 1.5L6.5 5.5L1.5 9.5Z" fill="none" stroke="#888"/></svg>
<svg class="a" style="left:1445px;top:6px" width="10" height="11"><path d="M8.5 1V10" stroke="#888" stroke-width="1.1"/><path d="M1.5 1.5L6.5 5.5L1.5 9.5Z" fill="none" stroke="#888"/></svg>
<svg class="a" style="left:1477px;top:5px" width="13" height="13"><circle cx="5.5" cy="5.5" r="3.6" fill="none" stroke="#9a9a9a" stroke-width="1.2"/><path d="M8 8L11.5 11.5" stroke="#9a9a9a" stroke-width="1.4"/><path d="M4 5.5H7M5.5 4V7" stroke="#9a9a9a" stroke-width="0.8"/></svg>
<svg class="a" style="left:1500px;top:4px" width="13" height="14"><path d="M6.5 2V12M2.5 7H10.5" stroke="#4a70a8" stroke-width="1"/><circle cx="6.5" cy="7" r="2.6" fill="none" stroke="#4a70a8" stroke-width="1.1"/></svg>
<svg class="a" style="left:1524px;top:5px" width="11" height="13"><path d="M1.5 1.5H7L9.5 4V11.5H1.5Z" fill="#2c3448" stroke="#6a7898" stroke-width="1"/></svg>
<svg class="a" style="left:1547px;top:5px" width="13" height="13"><path d="M2 6L6 2M5 5L10 10" stroke="#a8a090" stroke-width="1.1"/><circle cx="4" cy="4" r="1.8" fill="#5a5530"/></svg>
<svg class="a" style="left:1834px;top:7px" width="12" height="9"><path d="M2 7H10L6 3Z" fill="none" stroke="#b0b0b0" stroke-width="1"/></svg>
<svg class="a" style="left:1860px;top:5px" width="10" height="12"><rect x="5.5" y="1" width="3" height="10" fill="#d0d0d0"/><circle cx="3" cy="7" r="1" fill="#aaa"/></svg>
<svg class="a" style="left:1880px;top:5px" width="12" height="12"><rect x="1.5" y="2.5" width="9" height="8" fill="#333" stroke="#a8a8a8" stroke-width="1"/><rect x="4" y="5" width="4" height="3" fill="#555"/></svg>
<svg class="a" style="left:1903px;top:5px" width="12" height="12"><circle cx="6" cy="6" r="5" fill="#c02828"/><path d="M4 4L8 8M8 4L4 8" stroke="#ff9090" stroke-width="1"/></svg>
<div class="a" style="left:1138px;top:989px;width:19px;height:19px;background:#3a3a3a;border:1px solid #4a4a4a"></div>
<div class="a" style="left:1163px;top:989px;width:19px;height:19px;background:#3a3a3a;border:1px solid #4a4a4a"></div>
<svg class="a" style="left:1140px;top:991px" width="16" height="16"><circle cx="6" cy="6" r="2.5" fill="none" stroke="#ccc" stroke-width="0.9"/><path d="M6 2V10M2 6H10" stroke="#ccc" stroke-width="0.6"/><path d="M11 8V13M9.5 8H12.5M9.5 13H12.5" stroke="#eee" stroke-width="1"/></svg>
<svg class="a" style="left:1165px;top:991px" width="16" height="16"><path d="M5 2V7M3.5 2H6.5M3.5 7H6.5" stroke="#eee" stroke-width="1"/><circle cx="10" cy="10" r="2.5" fill="none" stroke="#ccc" stroke-width="0.9"/><path d="M10 6V14M6 10H14" stroke="#ccc" stroke-width="0.6"/></svg>
<div class="t" style="left:1579px;top:990.14px;font-size:13.5px;color:#f0f0f0;font-weight:normal;">Pages 27 to 28 of 46</div>
<div class="a" style="left:1711px;top:987px;width:59px;height:25px;background:#363636;border:1px solid #555"></div>
<div class="t" style="left:1727.5px;top:990.14px;font-size:13.5px;color:#f0f0f0;font-weight:normal;">72%</div>
<svg class="a" style="left:1758px;top:1002px" width="9" height="7"><path d="M1 1.5L4.5 5L8 1.5" fill="none" stroke="#ddd" stroke-width="1.2"/></svg>
<div class="a" style="left:1776px;top:989px;width:19px;height:19px;background:#333;border:1px solid #444"></div>
<div class="a" style="left:1900px;top:989px;width:19px;height:19px;background:#333;border:1px solid #444"></div>
<svg class="a" style="left:1780px;top:993px" width="11" height="11"><circle cx="4.5" cy="4.5" r="3" fill="none" stroke="#aaa" stroke-width="0.9"/><path d="M6.5 6.5L10 10" stroke="#aaa" stroke-width="1"/></svg>
<svg class="a" style="left:1904px;top:993px" width="11" height="11"><circle cx="4.5" cy="4.5" r="3" fill="none" stroke="#aaa" stroke-width="0.9"/><path d="M6.5 6.5L10 10" stroke="#aaa" stroke-width="1"/></svg>
<div class="a" style="left:1800px;top:994px;width:96px;height:4px;background:#3a3a3a;border-radius:2px"></div>
<div class="a" style="left:1800px;top:994px;width:32px;height:4px;background:#2f5fe8;border-radius:2px"></div>
<div class="a" style="left:1823px;top:986px;width:20px;height:20px;background:#9c9c9c;border-radius:50%"></div>
<div class="t" style="left:1483px;top:1021px;font-size:8.5px;color:#6a6a6a;-webkit-text-stroke-width:0">abc</div>
<div class="a" style="left:1502px;top:1020px;width:69px;height:26px;background:#363636;border:1px solid #555"></div>
<div class="t" style="left:1516.4px;top:1024.14px;font-size:13.5px;color:#f0f0f0;font-weight:normal;">en_GB</div>
<svg class="a" style="left:1560px;top:1037px" width="9" height="7"><path d="M1 1.5L4.5 5L8 1.5" fill="none" stroke="#ddd" stroke-width="1.2"/></svg>
<div class="a" style="left:1577px;top:1020px;width:64px;height:26px;background:#363636;border:1px solid #555"></div>
<div class="t" style="left:1586.5px;top:1024.14px;font-size:13.5px;color:#f0f0f0;font-weight:normal;">UTF-8</div>
<svg class="a" style="left:1630px;top:1037px" width="9" height="7"><path d="M1 1.5L4.5 5L8 1.5" fill="none" stroke="#ddd" stroke-width="1.2"/></svg>
<div class="t" style="left:1650.5px;top:1024.14px;font-size:13.5px;color:#f0f0f0;font-weight:normal;">Ready</div>
<div class="t" style="left:1701.5px;top:1024.14px;font-size:13.5px;color:#f0f0f0;font-weight:normal;">Automatic</div>
<svg class="a" style="left:1789px;top:1027px" width="10" height="12"><path d="M1 1H9V11L5 8L1 11Z" fill="#d03838"/><path d="M3.5 3.5H6.5" stroke="#ff9a9a" stroke-width="0.8"/></svg>
<svg class="a" style="left:1840px;top:1027px" width="10" height="12"><path d="M1 1H9V11L5 8L1 11Z" fill="#d03838"/><path d="M3.5 3.5H6.5" stroke="#ff9a9a" stroke-width="0.8"/></svg>
<svg class="a" style="left:1890px;top:1027px" width="10" height="12"><path d="M1 1H9V11L5 8L1 11Z" fill="#d03838"/><path d="M3.5 3.5H6.5" stroke="#ff9a9a" stroke-width="0.8"/></svg>
<div class="a" style="left:0;top:0;width:1920px;height:1047px;-webkit-text-stroke-width:0">
<div class="a" style="left:1224px;top:944.6px;font-family:'Liberation Serif',serif;font-size:15.9px;line-height:20px;font-weight:bold;color:#000;white-space:pre">12</div>
<div class="a" style="left:1404px;top:944.6px;width:401.4px;text-align:right;font-family:'Liberation Serif',serif;font-size:15.9px;line-height:20px;color:#000;white-space:pre">Robust DST with tree-based generated schema ranking</div>
<div class="a" style="left:1225px;top:965.5px;width:579.5px;height:1.3px;background:#000"></div>
<div class="a" style="left:1245.2px;top:345.58px;width:577.2px;text-align:justify;text-align-last:justify;font-family:'Liberation Serif',serif;font-size:15.85px;line-height:20px;color:#111;white-space:nowrap">Fig. 3.1 Ranking paraphrases of <i>Fare per ticket for journey</i> using a tree.&nbsp; Top level node</div>
<div class="a" style="left:1245.2px;top:365.38px;width:577.2px;text-align:justify;text-align-last:justify;font-family:'Liberation Serif',serif;font-size:15.85px;line-height:20px;color:#111;white-space:nowrap">split is by Jaccard distance (<i>J</i>), middle nodes split by entailment score (<i>E</i>) and leave nodes</div>
<div class="a" style="left:1245.2px;top:384.28px;width:577.2px;text-align:justify;text-align-last:justify;font-family:'Liberation Serif',serif;font-size:15.85px;line-height:20px;color:#111;white-space:nowrap">store string similarities (<i>S</i>).&nbsp; Here <i>f</i><span style="position:relative;top:4px">dec</span> =&thinsp;[None,&thinsp;max,&thinsp;min]. By using <i>J</i> we guarantee that</div>
<div class="a" style="left:1245.2px;top:404.18px;width:577.2px;text-align:justify;text-align-last:justify;font-family:'Liberation Serif',serif;font-size:15.85px;line-height:20px;color:#111;white-space:nowrap">candidates with <i>J</i> = 0 are syntactic paraphrases if <i>S</i> is constrained. Orange leaves show top</div>
<div class="a" style="left:1245.2px;top:422.88px;width:577.2px;font-family:'Liberation Serif',serif;font-size:15.85px;line-height:20px;color:#111;white-space:nowrap">ranked candidates. Numbers on paths show ranking order.</div>
<svg class="a" style="left:1136px;top:22px" width="784" height="330" viewBox="1136 22 784 330" font-family="Liberation Sans"><line x1="1329" y1="219.6" x2="1800" y2="219.6" stroke="#111" stroke-width="1.5" stroke-dasharray="4.5 3.5"/><line x1="1329" y1="260.3" x2="1800" y2="260.3" stroke="#111" stroke-width="1.5" stroke-dasharray="4.5 3.5"/><line x1="1680" y1="137" x2="1680" y2="336" stroke="#444" stroke-width="1.3" stroke-dasharray="4.5 3.5"/><line x1="1342" y1="199.2" x2="1384" y2="199.2" stroke="#111" stroke-width="1.8" stroke-dasharray="1.8 5.2"/><line x1="1493.4" y1="157.3" x2="1382" y2="179" stroke="#e8962a" stroke-width="2" /><line x1="1382" y1="179" x2="1346" y2="186" stroke="#e8962a" stroke-width="1.8" stroke-dasharray="1.8 4.5"/><line x1="1493.4" y1="157.3" x2="1406.4" y2="197.7" stroke="#e8962a" stroke-width="2.2" /><line x1="1493.4" y1="157.3" x2="1586.2" y2="197.7" stroke="#e8962a" stroke-width="2.2" /><line x1="1493.4" y1="157.3" x2="1746.2" y2="197.7" stroke="#e8962a" stroke-width="2.2" /><line x1="1406.4" y1="197.7" x2="1368.4" y2="240.6" stroke="#3b8fd5" stroke-width="2.2" /><line x1="1406.4" y1="197.7" x2="1441.6" y2="240.6" stroke="#e8962a" stroke-width="2.2" /><line x1="1586.2" y1="197.7" x2="1551.3" y2="240.5" stroke="#3b8fd5" stroke-width="2.2" /><line x1="1586.2" y1="197.7" x2="1615.3" y2="240.5" stroke="#e8962a" stroke-width="2.2" /><line x1="1746.2" y1="197.7" x2="1746" y2="240.5" stroke="#e8962a" stroke-width="2.2" /><line x1="1368.4" y1="240.6" x2="1368.4" y2="282" stroke="#3b8fd5" stroke-width="2.2" /><line x1="1441.6" y1="240.6" x2="1441.6" y2="282" stroke="#e8962a" stroke-width="2.2" /><line x1="1551.3" y1="240.5" x2="1522.5" y2="282" stroke="#3b8fd5" stroke-width="2.2" /><line x1="1615.3" y1="240.5" x2="1583.5" y2="282" stroke="#e8962a" stroke-width="2.2" /><line x1="1615.3" y1="240.5" x2="1646.4" y2="282" stroke="#3b8fd5" stroke-width="2.2" /><line x1="1746" y1="240.5" x2="1713.9" y2="282" stroke="#e8962a" stroke-width="2.2" /><line x1="1746" y1="240.5" x2="1780.8" y2="282" stroke="#55598e" stroke-width="2.2" /><line x1="1368.4" y1="282" x2="1368.4" y2="308" stroke="#3b8fd5" stroke-width="2.2" /><line x1="1441.6" y1="282" x2="1441.6" y2="308" stroke="#e8962a" stroke-width="2.2" /><line x1="1522.5" y1="282" x2="1522.5" y2="308" stroke="#5a8ab8" stroke-width="2.2" /><line x1="1583.5" y1="282" x2="1583.5" y2="308" stroke="#e8962a" stroke-width="2.2" /><line x1="1646.4" y1="282" x2="1646.4" y2="308" stroke="#3b8fd5" stroke-width="2.2" /><line x1="1713.9" y1="282" x2="1713.9" y2="308" stroke="#e8962a" stroke-width="2.2" /><line x1="1780.8" y1="282" x2="1780.8" y2="308" stroke="#55598e" stroke-width="2.2" /><circle cx="1493.4" cy="157.3" r="21" fill="#fff" stroke="#2d3e50" stroke-width="2.2"/><text x="1493.4" y="160.3" font-size="8.5" font-weight="bold" fill="#34495e" text-anchor="middle">ROOT</text><circle cx="1406.4" cy="197.7" r="15.6" fill="#3b8fd5" stroke="#e8962a" stroke-width="0.9"/><text x="1406.4" y="201.0" font-size="9" fill="#e8f2ff" text-anchor="middle">J=50</text><circle cx="1586.2" cy="197.7" r="15.6" fill="#3b8fd5" stroke="#e8962a" stroke-width="0.9"/><text x="1586.2" y="201.0" font-size="9" fill="#e8f2ff" text-anchor="middle">J=66</text><circle cx="1746.2" cy="197.7" r="15.6" fill="#5e4fae" stroke="#e8962a" stroke-width="0.9"/><text x="1746.2" y="201.0" font-size="9" fill="#e8f2ff" text-anchor="middle">J=0</text><circle cx="1368.4" cy="240.6" r="15.6" fill="#3b8fd5" stroke="#3b8fd5" stroke-width="0.9"/><text x="1368.4" y="243.9" font-size="9" fill="#e8f2ff" text-anchor="middle">E=0.86</text><circle cx="1441.6" cy="240.6" r="15.6" fill="#3b8fd5" stroke="#e8962a" stroke-width="0.9"/><text x="1441.6" y="243.9" font-size="9" fill="#e8f2ff" text-anchor="middle">E=0.99</text><circle cx="1551.3" cy="240.5" r="15.6" fill="#3b8fd5" stroke="#3b8fd5" stroke-width="0.9"/><text x="1551.3" y="243.8" font-size="9" fill="#e8f2ff" text-anchor="middle">E=0.88</text><circle cx="1615.3" cy="240.5" r="15.6" fill="#3b8fd5" stroke="#e8962a" stroke-width="0.9"/><text x="1615.3" y="243.8" font-size="9" fill="#e8f2ff" text-anchor="middle">E=0.99</text><circle cx="1746" cy="240.5" r="15.6" fill="#5e4fae" stroke="#e8962a" stroke-width="0.9"/><text x="1746" y="243.8" font-size="9" fill="#e8f2ff" text-anchor="middle">E=0.99</text><circle cx="1368.4" cy="282" r="15.6" fill="#3b8fd5" stroke="#3b8fd5" stroke-width="0.9"/><text x="1368.4" y="285.3" font-size="9" fill="#e8f2ff" text-anchor="middle">S=60</text><circle cx="1441.6" cy="282" r="15.6" fill="#3b8fd5" stroke="#e8962a" stroke-width="0.9"/><text x="1441.6" y="285.3" font-size="9" fill="#e8f2ff" text-anchor="middle">S=44</text><circle cx="1522.5" cy="282" r="15.6" fill="#3b8fd5" stroke="#3b8fd5" stroke-width="0.9"/><text x="1522.5" y="285.3" font-size="9" fill="#e8f2ff" text-anchor="middle">S=51</text><circle cx="1583.5" cy="282" r="15.6" fill="#3b8fd5" stroke="#e8962a" stroke-width="0.9"/><text x="1583.5" y="285.3" font-size="9" fill="#e8f2ff" text-anchor="middle">S=57</text><circle cx="1646.4" cy="282" r="15.6" fill="#3b8fd5" stroke="#3b8fd5" stroke-width="0.9"/><text x="1646.4" y="285.3" font-size="9" fill="#e8f2ff" text-anchor="middle">S=77</text><circle cx="1713.9" cy="282" r="15.6" fill="#5e4fae" stroke="#e8962a" stroke-width="0.9"/><text x="1713.9" y="285.3" font-size="9" fill="#e8f2ff" text-anchor="middle">S=44</text><circle cx="1780.8" cy="282" r="15.6" fill="#5e4fae" stroke="#5e4fae" stroke-width="0.9"/><text x="1780.8" y="285.3" font-size="9" fill="#e8f2ff" text-anchor="middle">S=51</text><circle cx="1544.2" cy="157.3" r="5.6" fill="#fff" stroke="#e8962a" stroke-width="1"/><text x="1544.2" y="159.9" font-size="7" font-weight="bold" fill="#111" text-anchor="middle">1</text><circle cx="1451.4" cy="184.4" r="5.6" fill="#fff" stroke="#e8962a" stroke-width="1"/><text x="1451.4" y="187.0" font-size="7" font-weight="bold" fill="#111" text-anchor="middle">3</text><circle cx="1535.3" cy="184.8" r="5.6" fill="#fff" stroke="#e8962a" stroke-width="1"/><text x="1535.3" y="187.4" font-size="7" font-weight="bold" fill="#111" text-anchor="middle">2</text><rect x="1333" y="307" width="71.79999999999995" height="27" rx="3" fill="#5aaae2"/><text x="1368.9" y="314" font-size="6.3" font-weight="bold" font-family="Liberation Serif" fill="#f4f8ff" text-anchor="middle" textLength="63.8" lengthAdjust="spacingAndGlyphs">Fare per ticket is the</text><text x="1368.9" y="322.8" font-size="6.3" font-weight="bold" font-family="Liberation Serif" fill="#f4f8ff" text-anchor="middle" textLength="66.7" lengthAdjust="spacingAndGlyphs">formula for calculating</text><text x="1368.9" y="331" font-size="6.3" font-weight="bold" font-family="Liberation Serif" fill="#f4f8ff" text-anchor="middle" textLength="23.2" lengthAdjust="spacingAndGlyphs">the fare</text><rect x="1414.2" y="307" width="54.799999999999955" height="27" rx="3" fill="#eda43a"/><text x="1441.6" y="314" font-size="6.3" font-weight="bold" font-family="Liberation Serif" fill="#f4f8ff" text-anchor="middle" textLength="52.2" lengthAdjust="spacingAndGlyphs">For a journey, the</text><text x="1441.6" y="322.8" font-size="6.3" font-weight="bold" font-family="Liberation Serif" fill="#f4f8ff" text-anchor="middle" textLength="49.3" lengthAdjust="spacingAndGlyphs">value will be per</text><text x="1441.6" y="331" font-size="6.3" font-weight="bold" font-family="Liberation Serif" fill="#f4f8ff" text-anchor="middle" textLength="20.3" lengthAdjust="spacingAndGlyphs">ticket.</text><rect x="1495.5" y="307" width="54.09999999999991" height="27" rx="3" fill="#5aaae2"/><text x="1522.55" y="314" font-size="6.3" font-weight="bold" font-family="Liberation Serif" fill="#f4f8ff" text-anchor="middle" textLength="52.1" lengthAdjust="spacingAndGlyphs">It is per ticket for</text><text x="1522.55" y="322.8" font-size="6.3" font-weight="bold" font-family="Liberation Serif" fill="#f4f8ff" text-anchor="middle" textLength="29.0" lengthAdjust="spacingAndGlyphs">the travel</text><text x="1522.55" y="331" font-size="6.3" font-weight="bold" font-family="Liberation Serif" fill="#f4f8ff" text-anchor="middle" textLength="40.6" lengthAdjust="spacingAndGlyphs">amongst points</text><rect x="1556.6" y="307" width="54.30000000000018" height="27" rx="3" fill="#eda43a"/><text x="1583.75" y="318.8" font-size="6.3" font-weight="bold" font-family="Liberation Serif" fill="#f4f8ff" text-anchor="middle" textLength="40.6" lengthAdjust="spacingAndGlyphs">It is cost per</text><text x="1583.75" y="327.3" font-size="6.3" font-weight="bold" font-family="Liberation Serif" fill="#f4f8ff" text-anchor="middle" textLength="52.3" lengthAdjust="spacingAndGlyphs">ticket for the trip</text><rect x="1620.4" y="307" width="52.799999999999955" height="27" rx="3" fill="#5aaae2"/><text x="1646.8000000000002" y="318.8" font-size="6.3" font-weight="bold" font-family="Liberation Serif" fill="#f4f8ff" text-anchor="middle" textLength="50.8" lengthAdjust="spacingAndGlyphs">Fare is per ticket</text><text x="1646.8000000000002" y="327.3" font-size="6.3" font-weight="bold" font-family="Liberation Serif" fill="#f4f8ff" text-anchor="middle" textLength="37.7" lengthAdjust="spacingAndGlyphs">for the ride.</text><rect x="1687.4" y="307" width="53.59999999999991" height="27" rx="3" fill="#eda43a"/><text x="1714.2" y="318.8" font-size="6.3" font-weight="bold" font-family="Liberation Serif" fill="#f4f8ff" text-anchor="middle" textLength="46.4" lengthAdjust="spacingAndGlyphs">Fare for journey</text><text x="1714.2" y="327.3" font-size="6.3" font-weight="bold" font-family="Liberation Serif" fill="#f4f8ff" text-anchor="middle" textLength="20.3" lengthAdjust="spacingAndGlyphs">ticket.</text><rect x="1751.2" y="307" width="53.799999999999955" height="27" rx="3" fill="#9a8fd2"/><text x="1778.1" y="314" font-size="6.3" font-weight="bold" font-family="Liberation Serif" fill="#f4f8ff" text-anchor="middle" textLength="46.4" lengthAdjust="spacingAndGlyphs">The fare for the</text><text x="1778.1" y="322.8" font-size="6.3" font-weight="bold" font-family="Liberation Serif" fill="#f4f8ff" text-anchor="middle" textLength="40.6" lengthAdjust="spacingAndGlyphs">journey is per</text><text x="1778.1" y="331" font-size="6.3" font-weight="bold" font-family="Liberation Serif" fill="#f4f8ff" text-anchor="middle" textLength="20.3" lengthAdjust="spacingAndGlyphs">ticket.</text><text x="1294.7" y="195" font-size="8.8" fill="#111" text-anchor="middle" >Step 2: BF right-left</text><text x="1294.7" y="206" font-size="8.8" fill="#111" text-anchor="middle" >traversal</text><text x="1294.7" y="239.5" font-size="8.8" fill="#111" text-anchor="middle" >Step 3: DF travesal using</text><text x="1294.7" y="250.5" font-size="8.8" fill="#111" text-anchor="middle" ><tspan font-family="Liberation Serif" font-style="italic" font-weight="bold" font-size="11" stroke="#000" stroke-width="0.5">f</tspan><tspan font-family="Liberation Serif" font-weight="bold" font-size="7" dy="1.5" stroke="#000" stroke-width="0.6">sim</tspan><tspan font-family="Liberation Serif" font-weight="bold" font-size="10" dy="-1.5" stroke="#000" stroke-width="0.7"> =max</tspan></text><text x="1294.7" y="280.5" font-size="8.8" fill="#111" text-anchor="middle" >Step 4: DF traversal</text><text x="1294.7" y="291" font-size="8.8" fill="#111" text-anchor="middle" >using <tspan font-family="Liberation Serif" font-style="italic" font-weight="bold" font-size="11" stroke="#000" stroke-width="0.5">f</tspan><tspan font-family="Liberation Serif" font-weight="bold" font-size="7" dy="1.5" stroke="#000" stroke-width="0.6">sim</tspan><tspan font-family="Liberation Serif" font-weight="bold" font-size="10" dy="-1.5" stroke="#000" stroke-width="0.7"> =min</tspan></text><text x="1690.4" y="169.3" font-size="8.6" fill="#6a70b5" textLength="131" lengthAdjust="spacingAndGlyphs">Step 1: select syntax parapharase</text></svg>
</div>
</body></html>
